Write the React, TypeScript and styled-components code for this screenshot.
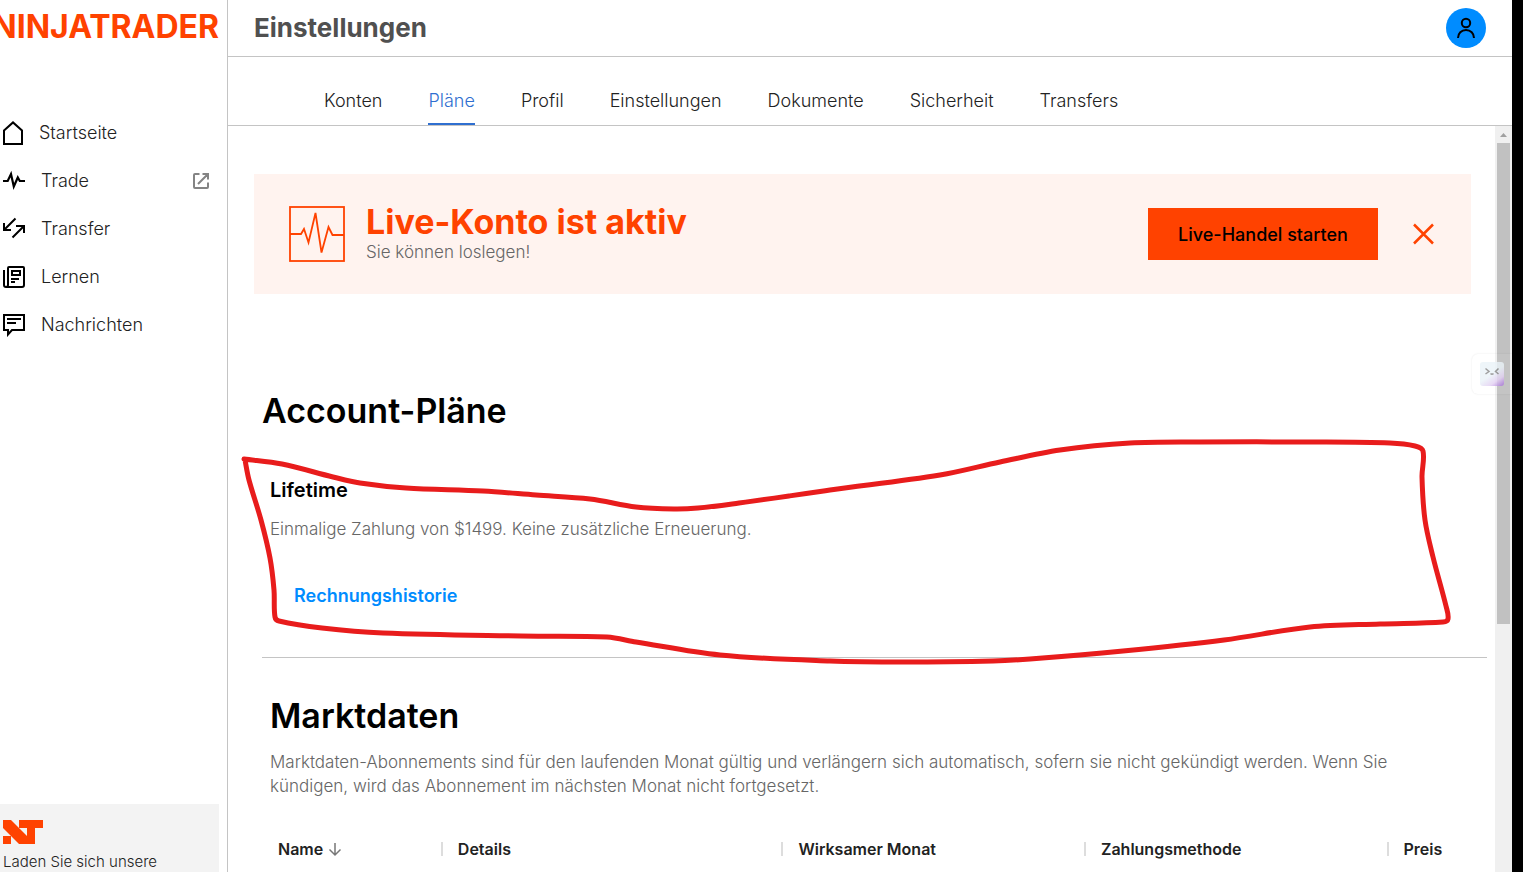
import React from "react";
import styled, { createGlobalStyle } from "styled-components";

const GlobalStyle = createGlobalStyle`
  *, *::before, *::after { box-sizing: border-box; }
  body { margin: 0; background: #fff; font-family: Inter, "Open Sans", sans-serif; font-size: 16px; color: #222; }
  h1, h2, h3, p, ul { margin: 0; padding: 0; }
  button { font-family: inherit; border: 0; padding: 0; cursor: pointer; }
  a { color: inherit; text-decoration: none; }
  svg { display: block; flex: none; }
`;

const ORANGE = "#ff4200";
const BLUE = "#008cff";
const LINE = "#c4c4c4";

const Screen = styled.div`
  position: relative;
  display: flex;
  height: 100vh;
  overflow: hidden;
  border-right: 11px solid #000;
`;

const Sidebar = styled.aside`
  display: flex;
  flex-direction: column;
  flex: none;
  width: 228px;
  border-right: 1px solid ${LINE};
  overflow: hidden;
`;

const Wordmark = styled.a`
  display: flex;
  justify-content: flex-end;
  height: 109px;
  padding: 9px 8px 0 0;
  font-size: 32px;
  line-height: 36px;
  font-weight: 700;
  color: ${ORANGE};
`;

const NavList = styled.ul`
  list-style: none;
  flex: 1;
`;

const NavLink = styled.a`
  display: flex;
  align-items: center;
  gap: 14px;
  height: 48px;
  padding: 0 17px 0 2px;
  font-size: 18px;
  font-weight: 300;
  color: #222;
`;

const NavText = styled.span`
  flex: 1;
  line-height: 24px;
`;

const Promo = styled.div`
  height: 68px;
  margin-right: 8px;
  padding: 16px 3px 0;
  background: #f3f3f3;
  font-size: 15px;
  line-height: 20px;
  font-weight: 300;
  white-space: nowrap;
`;

const PromoText = styled.p`
  margin-top: 8px;
`;

const Main = styled.main`
  display: flex;
  flex-direction: column;
  flex: 1;
  min-width: 0;
`;

const Header = styled.header`
  display: flex;
  align-items: center;
  justify-content: space-between;
  flex: none;
  height: 57px;
  padding: 0 26px;
  border-bottom: 1px solid ${LINE};
`;

const PageTitle = styled.h1`
  font-size: 26px;
  line-height: 32px;
  font-weight: 700;
  color: #505050;
`;

const Avatar = styled.button`
  display: flex;
  align-items: center;
  justify-content: center;
  width: 40px;
  height: 40px;
  border-radius: 50%;
  background: ${BLUE};
`;

const Tabs = styled.nav`
  display: flex;
  align-items: flex-end;
  gap: 46px;
  flex: none;
  height: 69px;
  padding-left: 96px;
  border-bottom: 1px solid ${LINE};
`;

const Tab = styled.a<{ $active?: boolean }>`
  height: 36px;
  font-size: 18px;
  line-height: 24px;
  font-weight: 300;
  color: ${(p) => (p.$active ? "#2f6fd0" : "#222")};
  border-bottom: 2px solid ${(p) => (p.$active ? "#2f6fd0" : "transparent")};
`;

const Body = styled.div`
  display: flex;
  flex: 1;
  min-height: 0;
`;

const Content = styled.div`
  flex: 1;
  min-width: 0;
  overflow: hidden;
  padding: 48px 8px 0 26px;
`;

const Banner = styled.section`
  display: flex;
  align-items: center;
  height: 120px;
  margin-right: 16px;
  padding: 0 36px 0 35px;
  background: #fff3ef;
`;

const BannerCopy = styled.div`
  flex: 1;
  padding-left: 21px;
`;

const BannerTitle = styled.h2`
  font-size: 34px;
  line-height: 36px;
  font-weight: 700;
  color: ${ORANGE};
`;

const Muted = styled.p`
  font-size: 17px;
  line-height: 24px;
  font-weight: 300;
  color: #666;
`;

const StartButton = styled.button`
  width: 230px;
  height: 52px;
  margin-right: 34px;
  background: ${ORANGE};
  font-size: 18px;
  font-weight: 500;
  color: #000;
`;

const CloseButton = styled.button`
  display: flex;
  background: transparent;
`;

const Section = styled.section`
  margin-left: 8px;
`;

const PlansSection = styled(Section)`
  margin-top: 95px;
  padding-bottom: 49px;
  border-bottom: 1px solid ${LINE};
`;

const SectionTitle = styled.h2`
  font-size: 34px;
  line-height: 44px;
  font-weight: 600;
  color: #000;
`;

const Plan = styled.div`
  padding: 45px 8px 0;
`;

const PlanName = styled.h3`
  margin-bottom: 15px;
  font-size: 20px;
  line-height: 24px;
  font-weight: 600;
  color: #000;
`;

const HistoryLink = styled.a`
  display: inline-block;
  margin: 43px 24px 0;
  font-size: 18px;
  line-height: 24px;
  font-weight: 600;
  color: ${BLUE};
`;

const DataSection = styled(Section)`
  padding-top: 36px;
`;

const DataIntro = styled.div`
  padding: 0 60px 0 8px;
`;

const DataText = styled(Muted)`
  margin-top: 12px;
`;

const DataTable = styled.table`
  width: 100%;
  margin-top: 40px;
  border-collapse: collapse;
  table-layout: fixed;
`;

const HeadCell = styled.th<{ $w?: string }>`
  width: ${(p) => p.$w ?? "auto"};
  padding: 0;
  text-align: left;
  font-size: 16px;
  line-height: 24px;
  font-weight: 600;
  color: #222;
`;

const HeadInner = styled.div<{ $first?: boolean }>`
  display: flex;
  align-items: center;
  gap: 4px;
  height: 14px;
  margin: 4px 0;
  padding-left: ${(p) => (p.$first ? "16px" : "15px")};
  border-left: ${(p) => (p.$first ? "0" : "2px solid #ddd")};
`;

const Scrollbar = styled.div`
  display: flex;
  flex-direction: column;
  align-items: center;
  flex: none;
  width: 17px;
  background: #f0f0f0;
`;

const ScrollThumb = styled.div`
  width: 13px;
  height: 64.5%;
  background: #c1c1c1;
`;

const Assistant = styled.div`
  position: absolute;
  top: 354px;
  right: 0;
  padding: 8px 8px 8px 8px;
  border-radius: 6px 0 0 6px;
  background: rgba(255, 255, 255, 0.05);
  box-shadow: 0 0 2px rgba(0, 0, 0, 0.1);
`;

const AssistantFace = styled.div`
  width: 24px;
  height: 24px;
  border-radius: 3px;
  background: linear-gradient(145deg, #eaf3f8 50%, #e3d0f3 75%, #a46bd8);
  opacity: 0.8;
`;

const Scribble = styled.svg`
  position: absolute;
  top: 0;
  left: 0;
  pointer-events: none;
`;

const HomeIcon = () => (
  <svg width="23" height="24" viewBox="0 0 23 24" fill="none" stroke="#000" strokeWidth="2">
    <path d="M2 9.500 11 1.400l9 8.100V23H2z" />
  </svg>
);

const PulseIcon = () => (
  <svg width="25" height="24" viewBox="0 0 25 24" fill="none" stroke="#000" strokeWidth="2">
    <path d="M1 12h4.700L9 5l2.800 12.500L15.800 8.500 17.800 12H23" strokeWidth="2.200" />
  </svg>
);

const TransferIcon = () => (
  <svg width="25" height="24" viewBox="0 0 25 24" fill="none" stroke="#000" strokeWidth="2">
    <path d="M13.500 1.500 2.500 12.500M2 6v7h7M10.500 20.500l11-11M14 9h8v7" />
  </svg>
);

const LearnIcon = () => (
  <svg width="25" height="24" viewBox="0 0 25 24" fill="none" stroke="#000" strokeWidth="2">
    <path d="M2 5v15Q2 22 4 22h16q2 0 2-2V3q0-1-1-1H7Q6 2 6 3v17q0 2-2 2" />
    <path d="M10 6h8v4h-8zM9 14h8M9 17h4" />
  </svg>
);

const MessageIcon = () => (
  <svg width="25" height="24" viewBox="0 0 25 24" fill="none" stroke="#000" strokeWidth="2">
    <path d="M2 2h20v15H10l-4 4.500V17H2zM5 6h14M5 10h9" />
  </svg>
);

const ExternalIcon = () => (
  <svg width="18" height="18" viewBox="0 0 18 18" fill="none" stroke="#848484" strokeWidth="2">
    <path d="M7.500 2H3Q2 2 2 3v12q0 1 1 1h12q1 0 1-1v-4.500M10.500 2H16v5.500M16 2 6 12" />
  </svg>
);

const NAV = [
  { label: "Startseite", Icon: HomeIcon },
  { label: "Trade", Icon: PulseIcon, external: true },
  { label: "Transfer", Icon: TransferIcon },
  { label: "Lernen", Icon: LearnIcon },
  { label: "Nachrichten", Icon: MessageIcon },
];

const TABS = ["Konten", "Pläne", "Profil", "Einstellungen", "Dokumente", "Sicherheit", "Transfers"];

const COLUMNS = [
  { label: "Details", width: "27.8%" },
  { label: "Wirksamer Monat", width: "24.7%" },
  { label: "Zahlungsmethode", width: "24.7%" },
  { label: "Preis" },
];

// Freehand pen stroke round the Lifetime plan.
const PEN: [number, number][] = [
  [244, 459], [282, 464], [333, 477], [360, 483], [406, 488], [483, 491], [536, 495], [590, 499],
  [636, 507], [674, 509], [698, 508], [739, 503], [789, 496], [830, 490], [940, 475], [1000, 462],
  [1060, 450], [1130, 443], [1200, 442], [1310, 442], [1390, 443], [1415, 446], [1423, 451], [1422, 477],
  [1425, 520], [1433, 557], [1446, 606], [1448, 619], [1443, 622], [1380, 624], [1310, 627], [1224, 640],
  [1123, 651], [1030, 659], [993, 661], [904, 662], [830, 661], [720, 655], [636, 642], [607, 637],
  [521, 636], [383, 633], [322, 628], [279, 621], [275, 617], [274, 590], [270, 558], [261, 520],
  [249, 480], [245, 460],
];

const smoothPath = (pts: [number, number][]) =>
  pts.slice(1).reduce((d, [x, y], i) => {
    const a = pts[Math.max(i - 1, 0)];
    const b = pts[i];
    const c = pts[Math.min(i + 2, pts.length - 1)];
    const reach = Math.hypot(x - b[0], y - b[1]);
    const inLen = Math.hypot(x - a[0], y - a[1]) || 1;
    const outLen = Math.hypot(c[0] - b[0], c[1] - b[1]) || 1;
    const k = reach / 3;
    const c1 = [b[0] + ((x - a[0]) / inLen) * k, b[1] + ((y - a[1]) / inLen) * k];
    const c2 = [x - ((c[0] - b[0]) / outLen) * k, y - ((c[1] - b[1]) / outLen) * k];
    return `${d}C${c1.join(" ")} ${c2.join(" ")} ${x} ${y}`;
  }, `M${pts[0].join(" ")}`);

export default function App() {
  return (
    <>
      <GlobalStyle />
      <Screen>
        <Sidebar>
          <Wordmark href="#">NINJATRADER</Wordmark>
          <NavList>
            {NAV.map(({ label, Icon, external }) => (
              <li key={label}>
                <NavLink href="#">
                  <Icon />
                  <NavText>{label}</NavText>
                  {external && <ExternalIcon />}
                </NavLink>
              </li>
            ))}
          </NavList>
          <Promo>
            <svg width="40" height="24" viewBox="0 0 40 24" fill={ORANGE}>
              <path fillRule="evenodd" d="M0 0H8L16 8V0H40V8H32V24H16L0 8ZM16 8L24 16V8ZM0 16H8V24H0Z" />
            </svg>
            <PromoText>Laden Sie sich unsere</PromoText>
          </Promo>
        </Sidebar>

        <Main>
          <Header>
            <PageTitle>Einstellungen</PageTitle>
            <Avatar aria-label="Profil">
              <svg width="24" height="24" viewBox="0 0 24 24" fill="none" stroke="#000" strokeWidth="2">
                <circle cx="12" cy="7" r="4.200" />
                <path d="M4 22c0-4.700 3.400-8 8-8s8 3.300 8 8" />
              </svg>
            </Avatar>
          </Header>
          <Tabs>
            {TABS.map((tab) => (
              <Tab key={tab} href="#" $active={tab === "Pläne"}>
                {tab}
              </Tab>
            ))}
          </Tabs>
          <Body>
            <Content>
              <Banner>
                <svg width="56" height="56" viewBox="0 0 56 56" fill="none" stroke={ORANGE} strokeWidth="1.800">
                  <rect x="1" y="1" width="54" height="54" />
                  <path d="M1 28h11l3-5 4.500 13.500L26.500 7l6 39.500L39.500 21l4 8H55" />
                </svg>
                <BannerCopy>
                  <BannerTitle>Live-Konto ist aktiv</BannerTitle>
                  <Muted>Sie können loslegen!</Muted>
                </BannerCopy>
                <StartButton>Live-Handel starten</StartButton>
                <CloseButton aria-label="Schließen">
                  <svg width="23" height="22" viewBox="0 0 23 22" fill="none" stroke={ORANGE} strokeWidth="2.500">
                    <path d="M2 1.500 21 20.500M21 1.500 2 20.500" />
                  </svg>
                </CloseButton>
              </Banner>

              <PlansSection>
                <SectionTitle>Account-Pläne</SectionTitle>
                <Plan>
                  <PlanName>Lifetime</PlanName>
                  <Muted>Einmalige Zahlung von $1499. Keine zusätzliche Erneuerung.</Muted>
                  <HistoryLink href="#">Rechnungshistorie</HistoryLink>
                </Plan>
              </PlansSection>

              <DataSection>
                <DataIntro>
                  <SectionTitle>Marktdaten</SectionTitle>
                  <DataText>
                    Marktdaten-Abonnements sind für den laufenden Monat gültig und verlängern sich automatisch, sofern
                    sie nicht gekündigt werden. Wenn Sie kündigen, wird das Abonnement im nächsten Monat nicht
                    fortgesetzt.
                  </DataText>
                </DataIntro>
                <DataTable>
                  <thead>
                    <tr>
                      <HeadCell $w="14.6%">
                        <HeadInner $first>
                          Name
                          <svg width="16" height="16" viewBox="0 0 16 16" fill="none" stroke="#777" strokeWidth="1.500">
                            <path d="M8 2v12M2.500 8.500 8 14l5.500-5.500" />
                          </svg>
                        </HeadInner>
                      </HeadCell>
                      {COLUMNS.map((c) => (
                        <HeadCell key={c.label} $w={c.width}>
                          <HeadInner>{c.label}</HeadInner>
                        </HeadCell>
                      ))}
                    </tr>
                  </thead>
                </DataTable>
              </DataSection>
            </Content>
            <Scrollbar aria-hidden="true">
              <svg width="17" height="17" viewBox="0 0 17 17" fill="#a0a0a0">
                <path d="M5 11 8.500 7 12 11z" />
              </svg>
              <ScrollThumb />
            </Scrollbar>
          </Body>
        </Main>

        <Assistant>
          <AssistantFace>
            <svg width="24" height="24" viewBox="0 0 24 24" fill="none" stroke="#888" strokeWidth="1.500">
              <path d="M5.500 6.500 9 9.500 5.500 12M18.500 6.500 15.500 9.500 18.500 12M10.500 11.500q1.500 1.500 3 0" />
            </svg>
          </AssistantFace>
        </Assistant>

        <Scribble
          width="1500"
          height="700"
          viewBox="0 0 1500 700"
          fill="none"
          stroke="#e81c1c"
          strokeWidth="5"
          strokeLinecap="round"
          strokeLinejoin="round"
        >
          <path d={smoothPath(PEN)} />
        </Scribble>
      </Screen>
    </>
  );
}
